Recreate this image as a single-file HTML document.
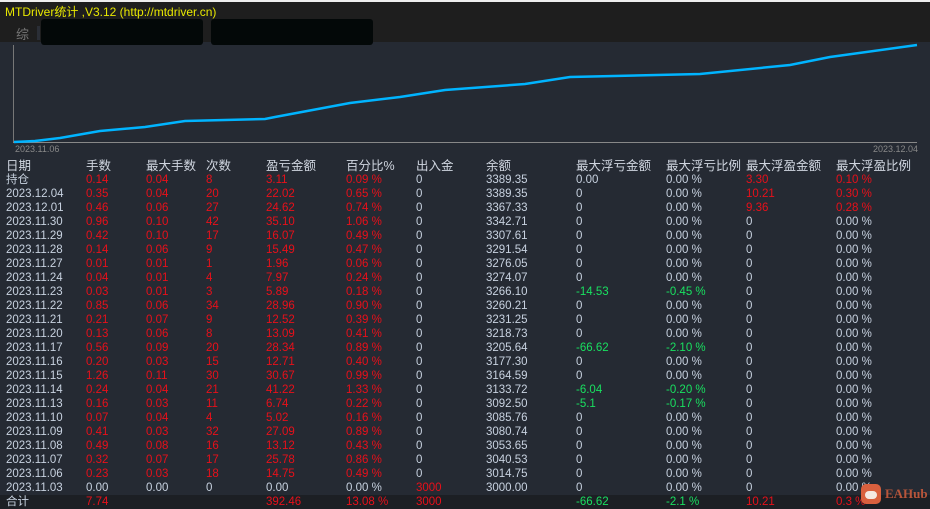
<!DOCTYPE html>
<html><head><meta charset="utf-8"><style>
*{margin:0;padding:0;box-sizing:border-box}
body{width:930px;height:509px;background:#252a33;overflow:hidden;position:relative;font-family:"Liberation Sans","Noto Sans CJK SC",sans-serif;font-size:11.5px;color:#c8d2e0}
.top{position:absolute;left:0;top:0;width:930px;height:42px;background:#1e1e1e;border-top:2px solid #eee}
.title{position:absolute;left:5px;top:3px;color:#e8e800;font-size:12px}
.zong{position:absolute;left:16px;top:24px;color:#777;font-size:13px}
.blk{position:absolute;top:19px;height:26px;background:#030808;border-radius:3px}
.row{position:absolute;left:0;width:930px;height:14px;line-height:14px;white-space:nowrap}
.row span{position:absolute;top:0}
.h{font-size:12.5px;color:#d0d6e0}
.r{color:#e8101a}.g{color:#19e060}
.tot{position:absolute;left:0;top:495px;width:930px;height:14px;background:#1c1f24}
</style></head><body>
<div class="top"></div>
<div class="title">MTDriver统计 ,V3.12 (http://mtdriver.cn)</div>
<div class="zong">综</div>
<div style="position:absolute;left:37px;top:26px;width:3px;height:14px;background:#2a2e36"></div>
<div class="blk" style="left:41px;width:162px"></div>
<div class="blk" style="left:211px;width:162px"></div>
<svg style="position:absolute;left:0;top:0" width="930" height="160">
<line x1="13.5" y1="45" x2="13.5" y2="142" stroke="#777"/>
<line x1="13" y1="142.5" x2="917" y2="142.5" stroke="#888"/>
<polyline fill="none" stroke="#00b4ff" stroke-width="2.5" points="14,142 35,141 60,138 100,131 145,127 185,121 265,119 275,117 350,103 400,97 445,90 525,84 570,77 700,74 790,65 830,57 917,45"/>
<text x="15" y="152" fill="#888" font-size="9" font-family="Liberation Sans">2023.11.06</text>
<text x="873" y="152" fill="#888" font-size="9" font-family="Liberation Sans">2023.12.04</text>
</svg>
<div class="tot"></div>
<div id="t"></div>
<script>
var cols=[6,86,146,206,266,346,416,486,576,666,746,836];
var H=["日期","手数","最大手数","次数","盈亏金额","百分比%","出入金","余额","最大浮亏金额","最大浮亏比例","最大浮盈金额","最大浮盈比例"];
var D=[
["持仓","0.14","0.04","8","3.11","0.09 %","0","3389.35","0.00","0.00 %","3.30","0.10 %"],
["2023.12.04","0.35","0.04","20","22.02","0.65 %","0","3389.35","0","0.00 %","10.21","0.30 %"],
["2023.12.01","0.46","0.06","27","24.62","0.74 %","0","3367.33","0","0.00 %","9.36","0.28 %"],
["2023.11.30","0.96","0.10","42","35.10","1.06 %","0","3342.71","0","0.00 %","0","0.00 %"],
["2023.11.29","0.42","0.10","17","16.07","0.49 %","0","3307.61","0","0.00 %","0","0.00 %"],
["2023.11.28","0.14","0.06","9","15.49","0.47 %","0","3291.54","0","0.00 %","0","0.00 %"],
["2023.11.27","0.01","0.01","1","1.96","0.06 %","0","3276.05","0","0.00 %","0","0.00 %"],
["2023.11.24","0.04","0.01","4","7.97","0.24 %","0","3274.07","0","0.00 %","0","0.00 %"],
["2023.11.23","0.03","0.01","3","5.89","0.18 %","0","3266.10","-14.53","-0.45 %","0","0.00 %"],
["2023.11.22","0.85","0.06","34","28.96","0.90 %","0","3260.21","0","0.00 %","0","0.00 %"],
["2023.11.21","0.21","0.07","9","12.52","0.39 %","0","3231.25","0","0.00 %","0","0.00 %"],
["2023.11.20","0.13","0.06","8","13.09","0.41 %","0","3218.73","0","0.00 %","0","0.00 %"],
["2023.11.17","0.56","0.09","20","28.34","0.89 %","0","3205.64","-66.62","-2.10 %","0","0.00 %"],
["2023.11.16","0.20","0.03","15","12.71","0.40 %","0","3177.30","0","0.00 %","0","0.00 %"],
["2023.11.15","1.26","0.11","30","30.67","0.99 %","0","3164.59","0","0.00 %","0","0.00 %"],
["2023.11.14","0.24","0.04","21","41.22","1.33 %","0","3133.72","-6.04","-0.20 %","0","0.00 %"],
["2023.11.13","0.16","0.03","11","6.74","0.22 %","0","3092.50","-5.1","-0.17 %","0","0.00 %"],
["2023.11.10","0.07","0.04","4","5.02","0.16 %","0","3085.76","0","0.00 %","0","0.00 %"],
["2023.11.09","0.41","0.03","32","27.09","0.89 %","0","3080.74","0","0.00 %","0","0.00 %"],
["2023.11.08","0.49","0.08","16","13.12","0.43 %","0","3053.65","0","0.00 %","0","0.00 %"],
["2023.11.07","0.32","0.07","17","25.78","0.86 %","0","3040.53","0","0.00 %","0","0.00 %"],
["2023.11.06","0.23","0.03","18","14.75","0.49 %","0","3014.75","0","0.00 %","0","0.00 %"],
["2023.11.03","0.00","0.00","0","0.00","0.00 %","3000","3000.00","0","0.00 %","0","0.00 %"]];
var T=["合计","7.74","","","392.46","13.08 %","3000","","-66.62","-2.1 %","10.21","0.3 %"];
var h='';
function row(y,a,cls,fn){h+='<div class="row'+(cls?' '+cls:'')+'" style="top:'+y+'px">';a.forEach(function(v,i){h+='<span class="'+fn(v,i)+'" style="left:'+cols[i]+'px">'+v+'</span>'});h+='</div>';}
row(159,H,'h',function(){return ''});
D.forEach(function(r,k){row(173+k*14,r,'',function(v,i){
 if(i>=1&&i<=5&&!(v=="0.00"||v=="0"||v=="0.00 %"))return 'r';
 if(i==6&&v!="0")return 'r';
 if((i==8||i==9)&&v.charAt(0)=='-')return 'g';
 if((i==10||i==11)&&v!="0"&&v!="0.00 %")return 'r';
 return '';})});
row(495,T,'',function(v,i){if(i==0)return '';if(i==8||i==9)return 'g';return 'r';});
document.getElementById('t').innerHTML=h;
</script>
<div style="position:absolute;left:861px;top:484px;width:20px;height:20px;border-radius:5px;background:#d9603e"></div>
<div style="position:absolute;left:865px;top:491px;width:12px;height:8px;border-radius:4px;background:#f4e8e2"></div>
<div style="position:absolute;left:885px;top:486px;color:#b8553a;font-size:13px;font-weight:bold;font-family:'Liberation Serif',serif">EAHub</div>
</body></html>
